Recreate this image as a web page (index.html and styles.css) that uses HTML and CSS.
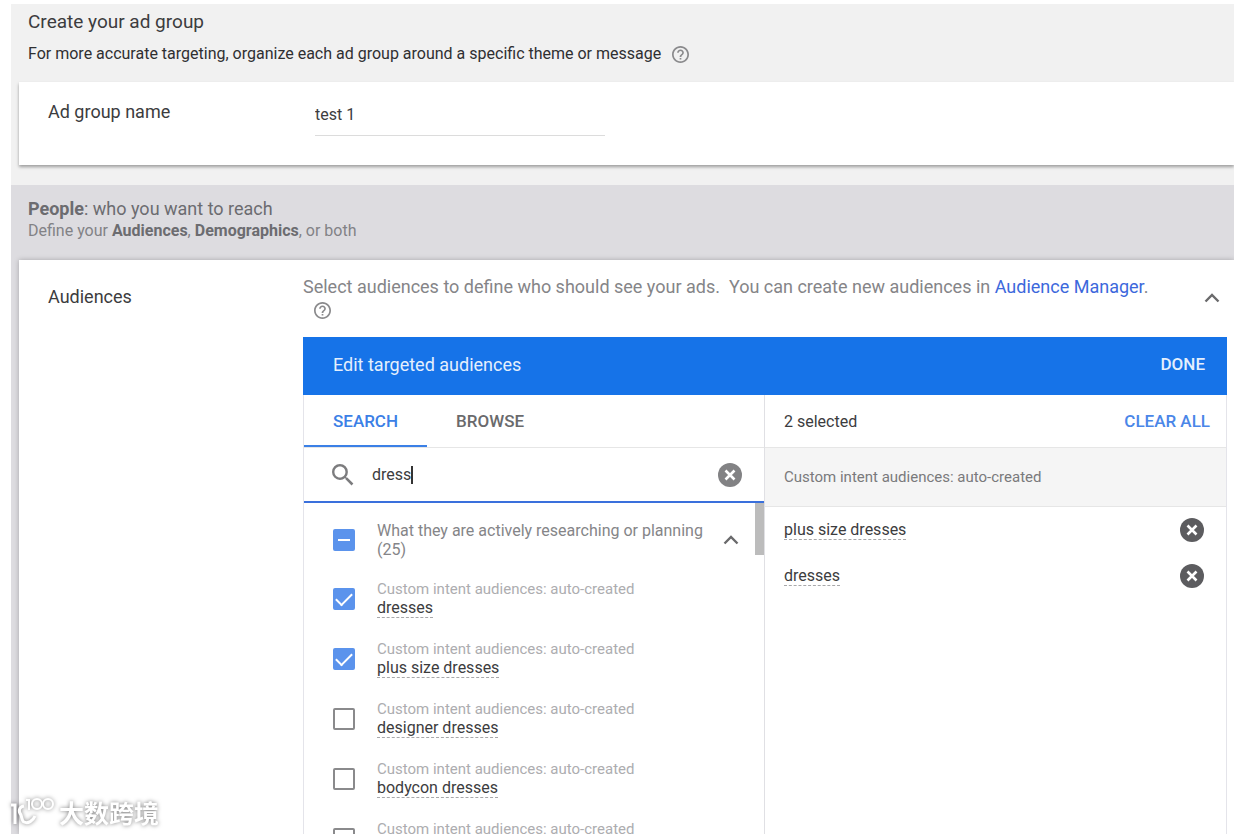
FILE: index.html
```html
<!DOCTYPE html>
<html lang="en">
<head>
    <meta charset="UTF-8">
    <meta name="viewport" content="width=device-width, initial-scale=1.0">
    <title>Create your ad group</title>
    <link rel="stylesheet" href="styles.css">
</head>
<body>
    <!-- shared icons -->
    <svg class="sprite" aria-hidden="true">
        <symbol id="icon-help" viewBox="2 2 20 20">
            <path d="M11 18h2v-2h-2v2zm1-16C6.48 2 2 6.48 2 12s4.48 10 10 10 10-4.48 10-10S17.52 2 12 2zm0 18c-4.41 0-8-3.59-8-8s3.59-8 8-8 8 3.59 8 8-3.59 8-8 8zm0-14c-2.21 0-4 1.79-4 4h2c0-1.1.9-2 2-2s2 .9 2 2c0 2-3 1.75-3 5h2c0-2.25 3-2.5 3-5 0-2.21-1.79-4-4-4z"/>
        </symbol>
        <symbol id="icon-clear" viewBox="0 0 24 24">
            <circle cx="12" cy="12" r="12"/>
            <path d="M7.5 7.5l9 9M16.5 7.5l-9 9" stroke="#fff" stroke-width="2.6"/>
        </symbol>
        <symbol id="icon-up" viewBox="0 0 16 10">
            <path d="M1.5 8.5L8 2l6.5 6.5" fill="none" stroke="currentColor" stroke-width="2.4"/>
        </symbol>
    </svg>

    <main class="page">
        <header class="page-header">
            <h1>Create your ad group</h1>
            <p>
                For more accurate targeting, organize each ad group around a specific theme or message
                <button type="button" class="help" aria-label="Help"><svg><use href="#icon-help"/></svg></button>
            </p>
        </header>

        <section class="card name-card">
            <label for="group-name" class="card-label">Ad group name</label>
            <input id="group-name" class="name-input" type="text" value="test 1">
        </section>

        <section class="people">
            <header class="people-header">
                <h2><strong>People</strong>: who you want to reach</h2>
                <p>Define your <strong>Audiences</strong>, <strong>Demographics</strong>, or both</p>
            </header>

            <div class="card audience-card">
                <h3 class="card-label">Audiences</h3>
                <div class="audience-body">
                    <div class="intro">
                        <p>
                            Select audiences to define who should see your ads.&nbsp; You can create new audiences in <a href="#">Audience Manager</a>.
                            <button type="button" class="help" aria-label="Help"><svg><use href="#icon-help"/></svg></button>
                        </p>
                        <button type="button" class="collapse" aria-label="Collapse audiences"><svg><use href="#icon-up"/></svg></button>
                    </div>

                    <div class="picker">
                        <div class="picker-bar">
                            <span>Edit targeted audiences</span>
                            <button type="button">DONE</button>
                        </div>
                        <div class="picker-columns">
                            <div class="finder">
                                <div class="tabs">
                                    <button type="button" class="tab active">SEARCH</button>
                                    <button type="button" class="tab">BROWSE</button>
                                </div>
                                <div class="search">
                                    <svg class="search-icon" viewBox="3 3 18 18"><path d="M15.5 14h-.79l-.28-.27A6.471 6.471 0 0 0 16 9.5 6.5 6.5 0 1 0 9.5 16c1.61 0 3.09-.59 4.23-1.57l.27.28v.79l5 4.99L20.49 19l-4.99-5zm-6 0C7.01 14 5 11.99 5 9.5S7.01 5 9.5 5 14 7.01 14 9.5 11.99 14 9.5 14z"/></svg>
                                    <div class="search-field">
                                        <input type="text" value="dress" aria-label="Search audiences">
                                        <span class="caret"></span>
                                    </div>
                                    <button type="button" class="clear" aria-label="Clear search"><svg><use href="#icon-clear"/></svg></button>
                                </div>
                                <div class="results">
                                    <div class="result-list">
                                        <div class="group">
                                            <input type="checkbox" id="group-all" class="partial">
                                            <label for="group-all">What they are actively researching or planning (25)</label>
                                            <button type="button" class="collapse" aria-label="Collapse group"><svg><use href="#icon-up"/></svg></button>
                                        </div>
                                        <div class="result">
                                            <input type="checkbox" id="r1" checked>
                                            <label for="r1"><small>Custom intent audiences: auto-created</small><span class="term">dresses</span></label>
                                        </div>
                                        <div class="result">
                                            <input type="checkbox" id="r2" checked>
                                            <label for="r2"><small>Custom intent audiences: auto-created</small><span class="term">plus size dresses</span></label>
                                        </div>
                                        <div class="result">
                                            <input type="checkbox" id="r3">
                                            <label for="r3"><small>Custom intent audiences: auto-created</small><span class="term">designer dresses</span></label>
                                        </div>
                                        <div class="result">
                                            <input type="checkbox" id="r4">
                                            <label for="r4"><small>Custom intent audiences: auto-created</small><span class="term">bodycon dresses</span></label>
                                        </div>
                                        <div class="result">
                                            <input type="checkbox" id="r5">
                                            <label for="r5"><small>Custom intent audiences: auto-created</small><span class="term">&nbsp;</span></label>
                                        </div>
                                    </div>
                                    <div class="scroll-thumb"></div>
                                </div>
                            </div>

                            <div class="selected">
                                <div class="selected-head">
                                    <span>2 selected</span>
                                    <button type="button">CLEAR ALL</button>
                                </div>
                                <h4>Custom intent audiences: auto-created</h4>
                                <ul>
                                    <li>
                                        <span class="term">plus size dresses</span>
                                        <button type="button" class="clear" aria-label="Remove plus size dresses"><svg><use href="#icon-clear"/></svg></button>
                                    </li>
                                    <li>
                                        <span class="term">dresses</span>
                                        <button type="button" class="clear" aria-label="Remove dresses"><svg><use href="#icon-clear"/></svg></button>
                                    </li>
                                </ul>
                            </div>
                        </div>
                    </div>
                </div>
            </div>
        </section>
    </main>

    <div class="watermark">
        <svg viewBox="0 0 46 32">
            <path d="M2 9h4v19" stroke-width="3"/>
            <path d="M15 10c-5 1-6 5-3 9 1 3 1 6 3 7 4 2 9-1 11-6" stroke-width="3"/>
            <path d="M17 4h3v10" stroke-width="2"/>
            <circle cx="28" cy="8" r="5" stroke-width="2"/>
            <circle cx="39" cy="8" r="5" stroke-width="2"/>
        </svg>
        <span lang="zh">大数跨境</span>
    </div>
</body>
</html>
```

FILE: styles.css
```css
* {
    box-sizing: border-box;
}
body {
    font-family: Roboto, "Noto Sans CJK SC", sans-serif;
    font-size: 16px;
    color: #3c3c3e;
    background-color: #fff;
    margin: 0;
    padding: 4px 0 0 11px;
    height: 100vh;
    overflow: hidden;
}
h1, h2, h3, h4, p, ul {
    margin: 0;
    padding: 0;
    font-weight: normal;
}
button {
    font: inherit;
    color: inherit;
    background: none;
    border: none;
    padding: 0;
    cursor: pointer;
}
input {
    font: inherit;
    color: inherit;
    margin: 0;
}
svg {
    display: block;
    fill: currentColor;
}
.sprite {
    display: none;
}
.page {
    display: flex;
    flex-direction: column;
    height: 100%;
    background-color: #f1f1f1;
}
.page-header {
    padding: 6px 17px 16px;
}
.page-header h1 {
    font-size: 19px;
    line-height: 24px;
}
.page-header p {
    display: flex;
    align-items: center;
    gap: 11px;
    margin-top: 8px;
    line-height: 24px;
    color: #2f2f31;
}
.help {
    color: #8a8a8c;
    vertical-align: middle;
}
.help svg {
    width: 17px;
    height: 17px;
}
.card {
    display: flex;
    margin-left: 8px;
    padding-left: 29px;
    background-color: #fff;
}
.card-label {
    font-size: 18px;
    line-height: 24px;
}
.name-card {
    align-items: flex-start;
    padding-top: 18px;
    padding-bottom: 29px;
    box-shadow: 0 2px 3px rgba(0, 0, 0, 0.35);
}
.name-card .card-label {
    width: 267px;
}
.name-input {
    width: 290px;
    height: 36px;
    border: none;
    border-bottom: 1px solid #dcdcdc;
    padding: 0 0 6px;
    outline: none;
}
.people {
    flex: 1;
    display: flex;
    flex-direction: column;
    min-height: 0;
    margin-top: 20px;
    background-color: #dddce0;
}
.people-header {
    padding: 12px 17px 19px;
    color: #6c6c70;
}
.people-header h2 {
    font-size: 18px;
    line-height: 24px;
}
.people-header p {
    line-height: 20px;
    color: #828286;
}
.people strong {
    font-weight: bold;
    color: #6c6c70;
}
.audience-card {
    flex: 1;
    min-height: 0;
    box-shadow: 0 0 5px rgba(0, 0, 0, 0.25);
}
.audience-card .card-label {
    flex: 0 0 255px;
    padding-top: 25px;
}
.audience-body {
    flex: 1;
    display: flex;
    flex-direction: column;
    min-width: 0;
    padding: 16px 7px 0 0;
}
.intro {
    display: flex;
    align-items: center;
    padding: 0 7px 17px 0;
    color: #858588;
    font-size: 18px;
    line-height: 22px;
}
.intro p {
    flex: 1;
    padding-right: 54px;
}
.intro a {
    color: #3c68dc;
    text-decoration: none;
}
.intro .help {
    margin-left: 11px;
}
.collapse {
    color: #6a6a6c;
}
.collapse svg {
    width: 16px;
    height: 10px;
}
.picker {
    flex: 1;
    display: flex;
    flex-direction: column;
    min-height: 0;
}
.picker-bar {
    display: flex;
    align-items: center;
    justify-content: space-between;
    flex: 0 0 58px;
    padding: 0 22px 4px 30px;
    background-color: #1673e8;
    color: #e4effd;
    font-size: 18px;
}
.picker-bar button {
    font-size: 17px;
    font-weight: 500;
}
.picker-columns {
    flex: 1;
    display: grid;
    grid-template-columns: 1fr 1fr;
    min-height: 0;
    border: solid #e4e4ea;
    border-width: 0 1px;
}
.finder {
    display: flex;
    flex-direction: column;
    min-height: 0;
    border-right: 1px solid #e0e0e4;
}
.tabs {
    display: flex;
    flex: 0 0 53px;
    border-bottom: 1px solid #e6e6e6;
}
.tab {
    padding: 0 29px;
    font-size: 17px;
    font-weight: 500;
    color: #6a6a6c;
}
.tab.active {
    color: #3b80e6;
    border-bottom: 2px solid #3b80e6;
    padding-top: 2px;
}
.search {
    display: flex;
    align-items: center;
    flex: 0 0 55px;
    padding: 0 22px 0 28px;
    border-bottom: 2px solid #3a70dc;
}
.search-icon {
    width: 22px;
    height: 22px;
    color: #7c7c7e;
}
.search-field {
    flex: 1;
    display: flex;
    align-items: center;
    padding-left: 18px;
}
.search-field input {
    field-sizing: content;
    border: none;
    padding: 0;
    outline: none;
    background: none;
}
.caret {
    width: 2px;
    height: 18px;
    background-color: #333;
}
.clear {
    color: #5c5c5f;
}
.clear svg {
    width: 24px;
    height: 24px;
}
.search .clear {
    color: #828284;
}
.results {
    flex: 1;
    display: flex;
    min-height: 0;
    overflow: hidden;
}
.result-list {
    flex: 1;
}
.scroll-thumb {
    width: 9px;
    height: 52px;
    background-color: #bcbcbc;
}
.group, .result {
    display: flex;
    align-items: center;
    padding-left: 29px;
}
.group {
    height: 66px;
    padding-top: 8px;
    padding-right: 16px;
}
.group label {
    flex: 1;
    line-height: 19px;
    color: #858588;
}
.result {
    height: 60px;
}
.group label, .result label {
    padding-left: 22px;
}
.result small {
    display: block;
    font-size: 15px;
    line-height: 18px;
    color: #adadb0;
}
.term {
    display: inline-block;
    line-height: 19px;
    border-bottom: 1px dashed #a8a8aa;
}
input[type="checkbox"] {
    appearance: none;
    flex: 0 0 22px;
    height: 22px;
    border: 2px solid #8a8a8c;
    border-radius: 2px;
    display: grid;
    place-items: center;
}
input[type="checkbox"]:checked, input.partial {
    background-color: #5b93ec;
    border-color: #5b93ec;
}
input[type="checkbox"]:checked::before {
    content: "";
    width: 14px;
    height: 7px;
    margin-bottom: 4px;
    border-left: 2px solid #fff;
    border-bottom: 2px solid #fff;
    transform: rotate(-45deg);
}
input.partial::before {
    content: "";
    width: 12px;
    height: 2px;
    background-color: #fff;
}
.selected-head {
    display: flex;
    align-items: center;
    justify-content: space-between;
    height: 53px;
    padding: 0 16px 0 19px;
    border-bottom: 1px solid #e6e6e6;
}
.selected-head button {
    color: #4a86e8;
    font-size: 17px;
    font-weight: 500;
}
.selected h4 {
    height: 59px;
    padding-left: 19px;
    font-size: 15px;
    line-height: 58px;
    color: #7a7a7c;
    background-color: #f5f5f5;
    border-bottom: 1px solid #e6e6e6;
}
.selected ul {
    list-style: none;
}
.selected li {
    display: flex;
    align-items: center;
    justify-content: space-between;
    height: 46px;
    padding: 0 22px 0 19px;
}
.watermark {
    position: fixed;
    left: 9px;
    bottom: 6px;
    display: flex;
    align-items: center;
    gap: 4px;
    color: #fff;
    font-family: "Noto Sans CJK SC", sans-serif;
    font-size: 25px;
    font-weight: bold;
    line-height: 32px;
    filter: drop-shadow(0 0 2px rgba(0, 0, 0, 0.5));
}
.watermark svg {
    width: 46px;
    height: 32px;
    fill: none;
    stroke: #fff;
}
```
